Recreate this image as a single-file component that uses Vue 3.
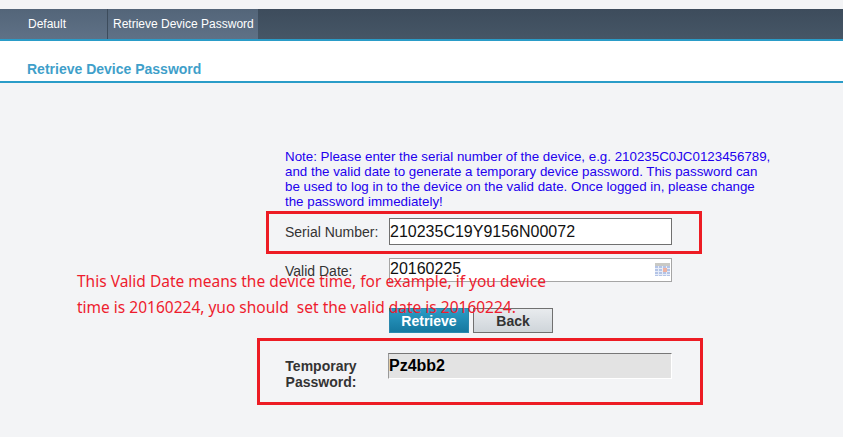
<script setup>
const tabs = [
  { label: 'Default', active: false },
  { label: 'Retrieve Device Password', active: true }
]
</script>

<template>
  <div class="page">
    <div class="nav">
      <div v-for="tab in tabs" :key="tab.label" class="tab" :class="{ active: tab.active }">{{ tab.label }}</div>
    </div>
    <div class="title"><span>Retrieve Device Password</span></div>

    <div class="content">
      <p class="note">
        Note: Please enter the serial number of the device, e.g. 210235C0JC0123456789,<br />
        and the valid date to generate a temporary device password. This password can<br />
        be used to log in to the device on the valid date. Once logged in, please change<br />
        the password immediately!
      </p>

      <div class="row serial-row">
        <label>Serial Number:</label>
        <div class="field serial">210235C19Y9156N00072</div>
      </div>

      <div class="row date-row">
        <label>Valid Date:</label>
        <div class="field date">
          20160225
          <svg class="cal" width="15" height="13" viewBox="0 0 15 13">
            <rect x="0" y="0" width="15" height="13" fill="#b4c4e6" />
            <rect x="0" y="0" width="15" height="3" fill="#c9c9c5" />
            <path d="M0 5.5h15M0 8.5h15M0 11.5h15M3.5 3v10M7.5 3v10M11.5 3v10" stroke="#e6ecf9" stroke-width="1" />
            <rect x="8" y="5" width="4" height="4" fill="#eeb3a3" />
          </svg>
        </div>
      </div>

      <div class="buttons">
        <button class="btn primary">Retrieve</button>
        <button class="btn">Back</button>
      </div>

      <div class="row temp-row">
        <label>Temporary<br />Password:</label>
        <div class="field temp">Pz4bb2</div>
      </div>

      <div class="box box-serial"></div>
      <div class="box box-temp"></div>
      <div class="remark">
        This Valid Date means the device time, for example, if you device<br />
        time is 20160224, yuo should&nbsp; set the valid date is 20160224.
      </div>
    </div>
  </div>
</template>

<style>
html, body {
  margin: 0;
  background: #f3f4f6;
}
</style>

<style scoped>
.page {
  width: 843px;
  height: 437px;
  overflow: hidden;
  padding-top: 9px;
  box-sizing: border-box;
  background: #f3f4f6;
  font-family: "Liberation Sans", Arial, sans-serif;
  font-size: 14px;
}
.nav {
  height: 30px;
  display: flex;
  background: linear-gradient(#3d4c5c, #465666);
  border-bottom: 2px solid #2a9cc8;
  font-size: 12px;
}
.tab {
  height: 30px;
  line-height: 30px;
  color: #fff;
  box-sizing: border-box;
  background: linear-gradient(#536579, #5f7186);
}
.tab:first-child {
  width: 108px;
  padding-left: 28px;
  border-right: 1px solid #3d4c5c;
}
.tab.active {
  width: 150px;
  padding-left: 5px;
}
.title {
  height: 42px;
  box-sizing: border-box;
  background: #fff;
  border-bottom: 2px solid #2a9cc8;
  padding: 21px 0 0 27px;
  font-size: 14px;
  line-height: 15px;
  font-weight: bold;
  color: #3f9fca;
}
.content {
  position: relative;
  padding: 66px 0 0 285px;
}
.note {
  margin: 0;
  color: #2200ee;
  font-size: 13.33px;
  line-height: 15px;
  white-space: nowrap;
}
.row {
  display: flex;
  align-items: center;
  color: #333;
}
.row label {
  width: 104px;
  flex: none;
}
.field {
  box-sizing: border-box;
  width: 283px;
  color: #111;
  font-size: 16px;
}
.serial-row {
  margin-top: 9px;
}
.serial {
  height: 27px;
  line-height: 25px;
  background: #fff;
  border: 1px solid #707070;
}
.date-row {
  margin-top: 13px;
}
.date-row label {
  padding-top: 2px;
}
.date {
  position: relative;
  height: 24px;
  line-height: 19px;
  background: #fff;
  border: 1px solid #a5a5a5;
}
.cal {
  position: absolute;
  right: 1px;
  top: 4px;
}
.buttons {
  display: flex;
  gap: 4px;
  margin: 26px 0 0 104px;
}
.btn {
  width: 80px;
  height: 25px;
  padding: 0;
  box-sizing: border-box;
  border: 1px solid #707070;
  background: linear-gradient(#e8ebee, #cfd5da);
  color: #333;
  font: bold 14px "Liberation Sans", Arial, sans-serif;
}
.btn.primary {
  border: 1px solid #2a88ad;
  background: linear-gradient(#2b9cc6, #15789f);
  color: #fff;
}
.temp-row {
  margin-top: 20px;
  font-weight: bold;
  line-height: 16px;
  align-items: flex-start;
}
.temp-row label {
  padding-top: 5px;
  text-align: center;
  width: 72px;
  margin-right: 31px;
}
.temp {
  height: 26px;
  width: 284px;
  line-height: 24px;
  background: #e3e3e3;
  border: 1px solid #fff;
  border-top: 1px solid #777;
  border-left: 1px solid #999;
  font-weight: bold;
  color: #000;
}
.box {
  position: absolute;
  border: 3px solid #ed1c24;
  box-sizing: border-box;
}
.box-serial {
  left: 266px;
  top: 128px;
  width: 436px;
  height: 43px;
}
.box-temp {
  left: 257px;
  top: 255px;
  width: 446px;
  height: 67px;
}
.remark {
  position: absolute;
  left: 77px;
  top: 185px;
  font-family: "Noto Sans", sans-serif;
  font-size: 15.5px;
  line-height: 26px;
  color: #ee1c2e;
  white-space: nowrap;
}
</style>
